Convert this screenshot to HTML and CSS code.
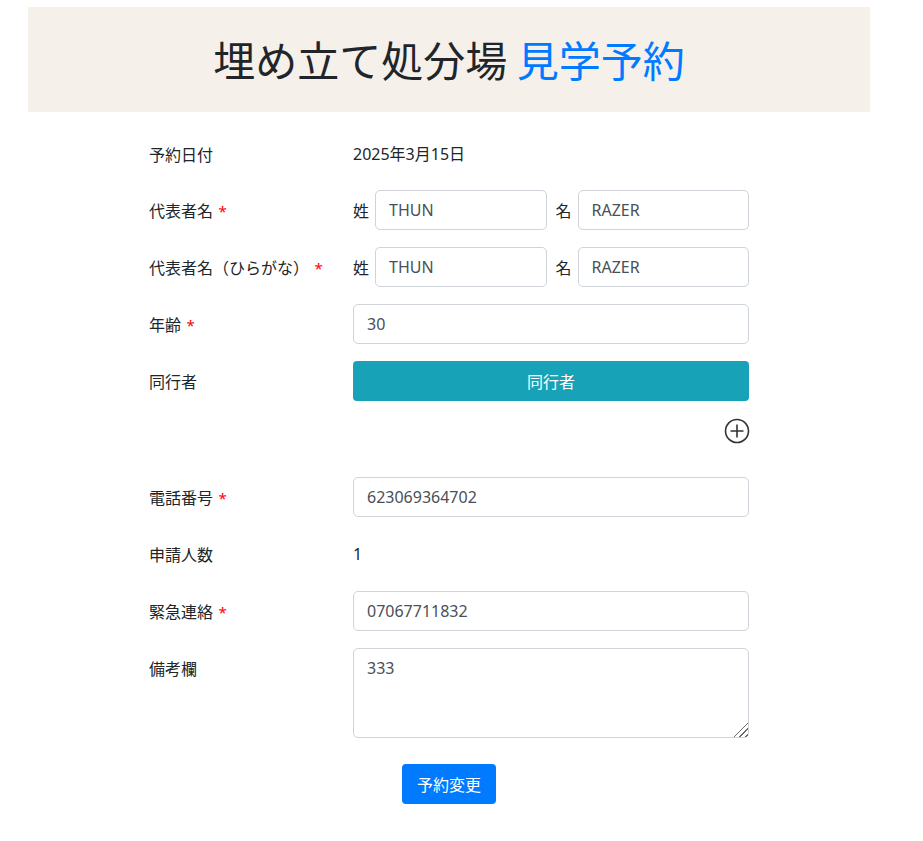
FILE: index.html
```html
<!DOCTYPE html>
<html lang="ja">
<head>
<meta charset="utf-8">
<title>埋め立て処分場 見学予約</title>
<link rel="stylesheet" href="styles.css">
</head>
<body>
<header class="banner">
  <h1 class="title">埋め立て処分場 <span class="accent">見学予約</span></h1>
</header>
<form class="form">
  <div class="row first">
    <div class="label">予約日付</div>
    <div class="field text">2025年3月15日</div>
  </div>
  <div class="row">
    <div class="label">代表者名 <span class="req">*</span></div>
    <div class="field name">
      <span class="sub">姓</span><input class="input" value="THUN">
      <span class="sub sub2">名</span><input class="input" value="RAZER">
    </div>
  </div>
  <div class="row">
    <div class="label">代表者名（ひらがな） <span class="req">*</span></div>
    <div class="field name">
      <span class="sub">姓</span><input class="input" value="THUN">
      <span class="sub sub2">名</span><input class="input" value="RAZER">
    </div>
  </div>
  <div class="row">
    <div class="label">年齢 <span class="req">*</span></div>
    <div class="field"><input class="input" value="30"></div>
  </div>
  <div class="row">
    <div class="label">同行者</div>
    <div class="field"><button type="button" class="btn-info">同行者</button></div>
  </div>
  <div class="add-row">
    <svg class="plus" width="26" height="26" viewBox="0 0 26 26" aria-hidden="true">
      <circle cx="13" cy="13" r="11.5" fill="none" stroke="#333" stroke-width="1.6"/>
      <path d="M13 6.5v13M6.5 13h13" stroke="#333" stroke-width="1.6" fill="none"/>
    </svg>
  </div>
  <div class="row">
    <div class="label">電話番号 <span class="req">*</span></div>
    <div class="field"><input class="input" value="623069364702"></div>
  </div>
  <div class="row">
    <div class="label">申請人数</div>
    <div class="field text">1</div>
  </div>
  <div class="row">
    <div class="label">緊急連絡 <span class="req">*</span></div>
    <div class="field"><input class="input" value="07067711832"></div>
  </div>
  <div class="row">
    <div class="label">備考欄</div>
    <div class="field"><textarea class="input area">333</textarea></div>
  </div>
  <div class="actions">
    <button type="button" class="btn-primary">予約変更</button>
  </div>
</form>
</body>
</html>
```

FILE: styles.css
```css
* { box-sizing: border-box; }
body {
  margin: 0;
  font-family: "Noto Sans", "Noto Sans CJK JP", sans-serif;
  font-size: 16px;
  color: #212529;
  background: #fff;
}
.banner {
  width: 842px;
  margin: 7px 0 0 28px;
  height: 105px;
  background: #f5f0ea;
  display: flex;
  align-items: center;
  justify-content: center;
}
.title {
  margin: 0;
  font-weight: 400;
  font-size: 42px;
  line-height: 1.2;
  color: #212529;
  font-family: "Noto Sans CJK JP", sans-serif;
}
.accent { color: #007bff; }
.form {
  width: 600px;
  margin: 22px 0 0 149px;
  display: flex;
  flex-direction: column;
  gap: 17px;
}
.row {
  display: flex;
  align-items: flex-start;
  min-height: 40px;
}
.row.first { height: 39px; min-height: 39px; }
.label {
  width: 204px;
  flex: none;
  height: 40px;
  line-height: 40px;
  font-family: "Noto Sans CJK JP", sans-serif;
  white-space: nowrap;
}
.req {
  color: #f00;
  font-size: 15px;
  line-height: 1;
  margin-left: 2px;
  font-family: "Noto Sans", sans-serif;
}
.field {
  flex: 1;
  display: flex;
  align-items: center;
  min-height: 40px;
}
.text { height: 40px; line-height: 40px; }
.sub {
  flex: none;
  width: 17px;
  margin-right: 5px;
  font-family: "Noto Sans CJK JP", sans-serif;
}
.sub2 { margin-left: 9px; }
.input {
  flex: 1;
  width: 100%;
  min-width: 0;
  height: 40px;
  padding: 6px 13px;
  border: 1px solid #ced4da;
  border-radius: 5px;
  font: inherit;
  font-size: 16px;
  color: #495057;
  background: #fff;
}
.area {
  height: 90px;
  padding-top: 8px;
  resize: vertical;
}
.area::-webkit-scrollbar { width: 16px; height: 16px; }
.area::-webkit-resizer {
  background:
    linear-gradient(135deg, #fff 52%, transparent 52%),
    repeating-linear-gradient(135deg, transparent 0 2.4px, #6b6b6b 2.4px 4px);
}
.btn-info {
  width: 100%;
  height: 40px;
  border: none;
  border-radius: 4px;
  background: #17a2b8;
  color: #fff;
  font: inherit;
  font-family: "Noto Sans CJK JP", sans-serif;
  font-size: 16px;
}
.add-row {
  display: flex;
  justify-content: flex-end;
  height: 42px;
}
.plus { display: block; margin-right: -1px; }
.actions {
  display: flex;
  justify-content: center;
  margin-top: 9px;
}
.btn-primary {
  width: 94px;
  height: 40px;
  border: none;
  border-radius: 4px;
  background: #007bff;
  color: #fff;
  font: inherit;
  font-family: "Noto Sans CJK JP", sans-serif;
  font-size: 16px;
}
```
